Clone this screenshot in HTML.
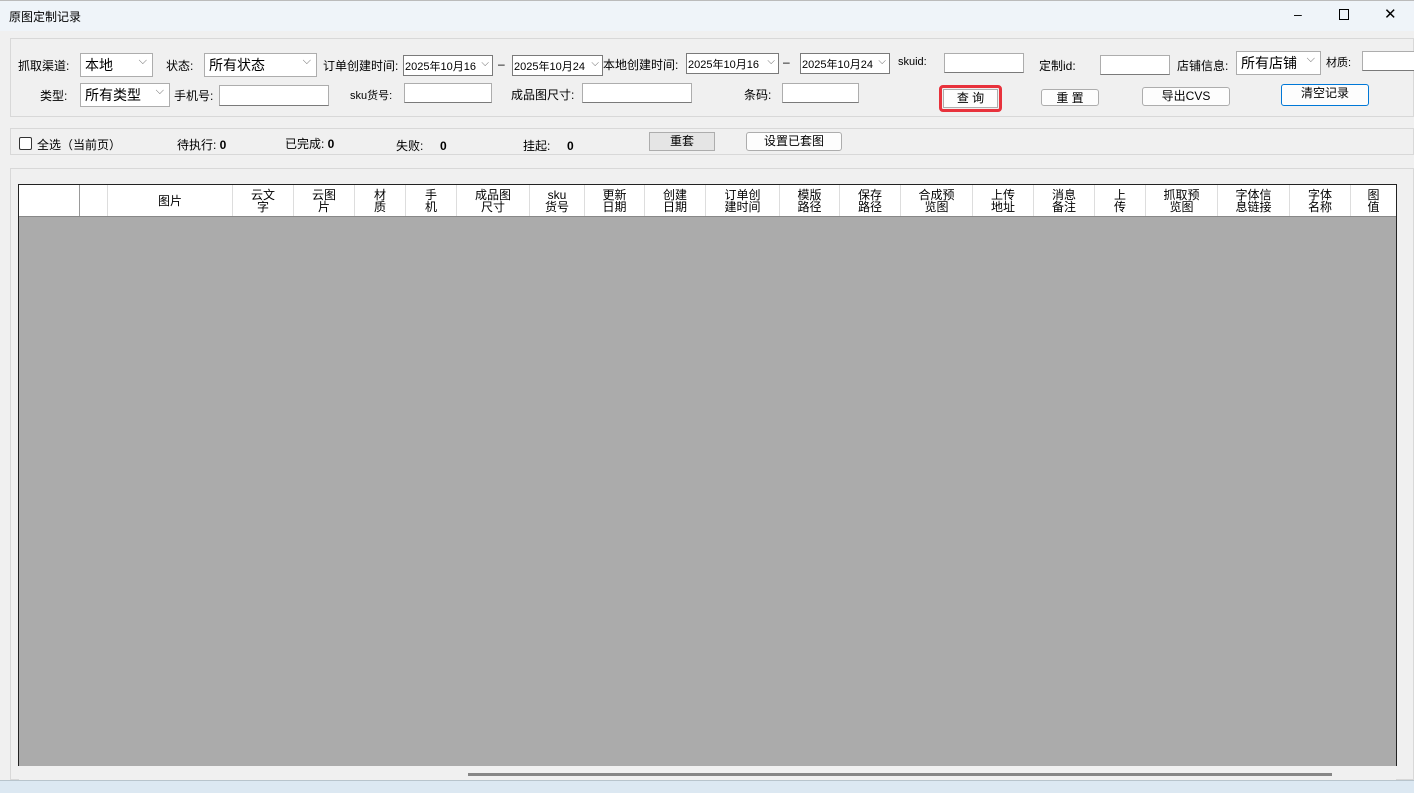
<!DOCTYPE html>
<html><head><meta charset="utf-8"><style>
*{box-sizing:border-box;margin:0;padding:0}
body{width:1414px;height:793px;overflow:hidden;background:#f0f0f0;font-family:"Liberation Sans","Noto Sans CJK SC",sans-serif;font-size:12px;color:#000;position:relative}
.a{position:absolute;white-space:nowrap}
.tb{left:0;top:0;width:1414px;height:31px;background:#eff4f9;border-top:1px solid #bbb}
.box{border:1px solid #d8d8d8}
.in{background:#fff;border:1px solid #7a7a7a;border-color:#adadad #adadad #7a7a7a #adadad}
.sel{background:#fff;border:1px solid #adadad;font-size:14px;padding:1px 4px}
.sel:after{content:"⌵";position:absolute;right:5px;top:1px;font-size:11px;color:#666}
.dt{background:#fff;border:1px solid #7a7a7a;font-size:11px;padding:2px 1px;overflow:hidden}
.dt:after{content:"⌵";position:absolute;right:3px;top:2px;font-size:10px;color:#666;background:#fff;padding-left:2px}
.btn{background:#fdfdfd;border:1px solid #adadad;border-radius:3px;text-align:center;line-height:17px}
.hd{top:185px;height:31px;border-right:1px solid #ddd;font-size:12px;line-height:12px;text-align:center;display:flex;align-items:center;justify-content:center;background:#fff}
</style></head><body>
<div class="a tb"></div>
<div class="a" style="left:9px;top:8px;font-size:12px">原图定制记录</div>
<div class="a" style="left:1294px;top:6px;font-size:14px">–</div>
<div class="a" style="left:1339px;top:9px;width:10px;height:11px;border:1px solid #000"></div>
<div class="a" style="left:1384px;top:5px;font-size:15px">✕</div>

<div class="a box" style="left:10px;top:38px;width:1404px;height:79px"></div>
<div class="a" style="left:18px;top:57px">抓取渠道:</div>
<div class="a sel" style="left:80px;top:53px;width:73px;height:24px">本地</div>
<div class="a" style="left:166px;top:57px">状态:</div>
<div class="a sel" style="left:204px;top:53px;width:113px;height:24px">所有状态</div>
<div class="a" style="left:323px;top:57px">订单创建时间:</div>
<div class="a dt" style="left:403px;top:55px;width:90px;height:21px">2025年10月16</div>
<div class="a" style="left:498px;top:57px">–</div>
<div class="a dt" style="left:512px;top:55px;width:91px;height:21px">2025年10月24</div>
<div class="a" style="left:603px;top:56px">本地创建时间:</div>
<div class="a dt" style="left:686px;top:53px;width:93px;height:21px">2025年10月16</div>
<div class="a" style="left:783px;top:55px">–</div>
<div class="a dt" style="left:800px;top:53px;width:90px;height:21px">2025年10月24</div>
<div class="a" style="left:898px;top:56px;font-size:11px">skuid:</div>
<div class="a in" style="left:944px;top:53px;width:80px;height:20px"></div>
<div class="a" style="left:1039px;top:57px">定制id:</div>
<div class="a in" style="left:1100px;top:55px;width:70px;height:20px"></div>
<div class="a" style="left:1177px;top:57px">店铺信息:</div>
<div class="a sel" style="left:1236px;top:51px;width:85px;height:24px">所有店铺</div>
<div class="a" style="left:1326px;top:54px;font-size:11px">材质:</div>
<div class="a in" style="left:1362px;top:51px;width:52px;height:20px;border-right:none"></div>

<div class="a" style="left:40px;top:87px">类型:</div>
<div class="a sel" style="left:80px;top:83px;width:90px;height:24px">所有类型</div>
<div class="a" style="left:174px;top:87px">手机号:</div>
<div class="a in" style="left:219px;top:85px;width:110px;height:21px"></div>
<div class="a" style="left:350px;top:87px;font-size:11px">sku货号:</div>
<div class="a in" style="left:404px;top:83px;width:88px;height:20px"></div>
<div class="a" style="left:511px;top:86px">成品图尺寸:</div>
<div class="a in" style="left:582px;top:83px;width:110px;height:20px"></div>
<div class="a" style="left:744px;top:86px">条码:</div>
<div class="a in" style="left:782px;top:83px;width:77px;height:20px"></div>
<div class="a" style="left:939px;top:85px;width:63px;height:27px;border:3px solid #e8323c;border-radius:4px"></div>
<div class="a btn" style="left:943px;top:89px;width:55px;height:19px;border-radius:0">查 询</div>
<div class="a btn" style="left:1041px;top:89px;width:58px;height:17px">重 置</div>
<div class="a btn" style="left:1142px;top:87px;width:88px;height:19px">导出CVS</div>
<div class="a btn" style="left:1281px;top:84px;width:88px;height:22px;border-color:#0078d7">清空记录</div>

<div class="a box" style="left:10px;top:128px;width:1404px;height:27px"></div>
<div class="a" style="left:19px;top:137px;width:13px;height:13px;border:1px solid #333;border-radius:2px;background:#fff"></div>
<div class="a" style="left:37px;top:136px">全选（当前页）</div>
<div class="a" style="left:177px;top:136px">待执行: <b>0</b></div>
<div class="a" style="left:285px;top:135px">已完成: <b>0</b></div>
<div class="a" style="left:396px;top:137px">失败: &nbsp; &nbsp; <b>0</b></div>
<div class="a" style="left:523px;top:137px">挂起: &nbsp; &nbsp; <b>0</b></div>
<div class="a btn" style="left:649px;top:132px;width:66px;height:19px;background:#e5e5e5;border-radius:0">重套</div>
<div class="a btn" style="left:746px;top:132px;width:96px;height:19px">设置已套图</div>

<div class="a box" style="left:10px;top:168px;width:1404px;height:612px"></div>
<div class="a" style="left:18px;top:184px;width:1379px;height:582px;background:#ababab;border:1px solid #222;border-bottom:none"></div>
<div class="a" style="left:19px;top:216px;width:1377px;height:1px;background:#888"></div>
<div class="a hd" style="left:19px;width:61px;border-right-color:#999"></div>
<div class="a hd" style="left:80px;width:28px"></div>
<div class="a hd" style="left:108px;width:125px">图片</div>
<div class="a hd" style="left:233px;width:61px">云文<br>字</div>
<div class="a hd" style="left:294px;width:61px">云图<br>片</div>
<div class="a hd" style="left:355px;width:51px">材<br>质</div>
<div class="a hd" style="left:406px;width:51px">手<br>机</div>
<div class="a hd" style="left:457px;width:73px">成品图<br>尺寸</div>
<div class="a hd" style="left:530px;width:55px">sku<br>货号</div>
<div class="a hd" style="left:585px;width:60px">更新<br>日期</div>
<div class="a hd" style="left:645px;width:61px">创建<br>日期</div>
<div class="a hd" style="left:706px;width:74px">订单创<br>建时间</div>
<div class="a hd" style="left:780px;width:60px">模版<br>路径</div>
<div class="a hd" style="left:840px;width:61px">保存<br>路径</div>
<div class="a hd" style="left:901px;width:72px">合成预<br>览图</div>
<div class="a hd" style="left:973px;width:61px">上传<br>地址</div>
<div class="a hd" style="left:1034px;width:61px">消息<br>备注</div>
<div class="a hd" style="left:1095px;width:51px">上<br>传</div>
<div class="a hd" style="left:1146px;width:72px">抓取预<br>览图</div>
<div class="a hd" style="left:1218px;width:72px">字体信<br>息链接</div>
<div class="a hd" style="left:1290px;width:61px">字体<br>名称</div>
<div class="a hd" style="left:1351px;width:45px;border-right:none">图<br>值</div>
<div class="a" style="left:19px;top:766px;width:1377px;height:14px;background:#f0f0f0"></div>
<div class="a" style="left:468px;top:773px;width:864px;height:3px;background:#868686"></div>
<div class="a" style="left:0;top:780px;width:1414px;height:13px;background:#dce8f2;border-top:1px solid #b8c4cc"></div>
</body></html>
